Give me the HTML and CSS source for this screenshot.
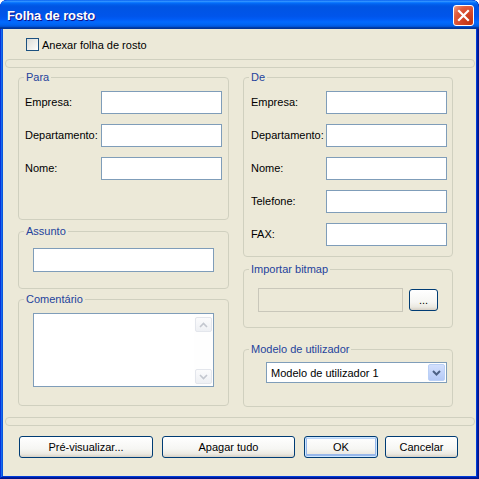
FILE: index.html
```html
<!DOCTYPE html>
<html lang="pt">
<head>
<meta charset="utf-8">
<title>Folha de rosto</title>
<link rel="stylesheet" href="styles.css">
</head>
<body>
<div class="window">
  <div class="titlebar">
    <span class="title">Folha de rosto</span>
    <button class="close" aria-label="Fechar">
      <svg width="13" height="13" viewBox="0 0 13 13"><path d="M2 2 L11 11 M11 2 L2 11" stroke="#fff" stroke-width="2.2" stroke-linecap="square" fill="none"/></svg>
    </button>
  </div>
  <div class="client">
    <label class="check-row"><span class="checkbox"></span>Anexar folha de rosto</label>
    <div class="separator"></div>
    <div class="columns">
      <div class="col col-left">
        <fieldset class="group g-para">
          <legend>Para</legend>
          <div class="rows">
            <div class="row"><span class="lbl">Empresa:</span><span class="input field"></span></div>
            <div class="row"><span class="lbl">Departamento:</span><span class="input field"></span></div>
            <div class="row"><span class="lbl">Nome:</span><span class="input field"></span></div>
          </div>
        </fieldset>
        <fieldset class="group g-assunto">
          <legend>Assunto</legend>
          <span class="input wide"></span>
        </fieldset>
        <fieldset class="group g-coment">
          <legend>Comentário</legend>
          <div class="input textarea">
            <div class="scrollbar">
              <span class="sbtn"><svg width="9" height="6" viewBox="0 0 9 6"><path d="M1 5 L4.5 1.5 L8 5" stroke="#c3c7cf" stroke-width="1.6" fill="none"/></svg></span>
              <span class="sbtn"><svg width="9" height="6" viewBox="0 0 9 6"><path d="M1 1 L4.5 4.5 L8 1" stroke="#c3c7cf" stroke-width="1.6" fill="none"/></svg></span>
            </div>
          </div>
        </fieldset>
      </div>
      <div class="col col-right">
        <fieldset class="group g-de">
          <legend>De</legend>
          <div class="rows">
            <div class="row"><span class="lbl">Empresa:</span><span class="input field"></span></div>
            <div class="row"><span class="lbl">Departamento:</span><span class="input field"></span></div>
            <div class="row"><span class="lbl">Nome:</span><span class="input field"></span></div>
            <div class="row"><span class="lbl">Telefone:</span><span class="input field"></span></div>
            <div class="row"><span class="lbl">FAX:</span><span class="input field"></span></div>
          </div>
        </fieldset>
        <fieldset class="group g-import">
          <legend>Importar bitmap</legend>
          <div class="import-row">
            <span class="input disabled"></span>
            <button class="btn btn-dots">...</button>
          </div>
        </fieldset>
        <fieldset class="group g-modelo">
          <legend>Modelo de utilizador</legend>
          <div class="input select">
            <span class="select-text">Modelo de utilizador 1</span>
            <span class="drop"><svg width="9" height="6" viewBox="0 0 9 6"><path d="M1 1 L4.5 4.5 L8 1" stroke="#4d6185" stroke-width="2" fill="none"/></svg></span>
          </div>
        </fieldset>
      </div>
    </div>
    <div class="separator sep-bottom"></div>
    <div class="buttons">
      <button class="btn b-prev">Pré-visualizar...</button>
      <button class="btn b-clear">Apagar tudo</button>
      <button class="btn b-ok">OK</button>
      <button class="btn b-cancel">Cancelar</button>
    </div>
  </div>
</div>
</body>
</html>
```
FILE: styles.css
```css
* { box-sizing: border-box; }
body {
  margin: 0;
  background: #ffffff;
  font-family: "Liberation Sans", Arial, sans-serif;
  font-size: 11px;
  color: #000;
}
.window {
  width: 479px;
  height: 479px;
  display: flex;
  flex-direction: column;
  background: #0855dd;
  border-radius: 7px 7px 0 0;
  overflow: hidden;
  box-shadow: inset -1px -1px #00138c, inset 1px 1px #0831d9, inset -2px -2px #001ea0, inset 2px 2px #166aee, inset -3px -3px #003bda, inset 3px 3px #0855dd;
}
.titlebar {
  height: 29px;
  flex: none;
  display: flex;
  align-items: center;
  justify-content: space-between;
  padding: 0 5px 0 7px;
  background: linear-gradient(to bottom, #0058ee 0%, #3593ff 4%, #288eff 6%, #127dff 8%, #036ffc 10%, #0262ee 14%, #0057e5 20%, #0054e3 24%, #0055eb 56%, #005bf5 66%, #026afe 76%, #0062ef 86%, #0052d6 92%, #0040ab 94%, #003092 100%);
  border-radius: 7px 7px 0 0;
}
.title {
  color: #fff;
  font-weight: bold;
  font-size: 13px;
  text-shadow: 1px 1px #0f1089;
  letter-spacing: -0.1px;
  margin-top: 1px;
}
.close {
  width: 21px;
  height: 21px;
  padding: 0;
  border: 1px solid #fff;
  border-radius: 3px;
  display: flex;
  align-items: center;
  justify-content: center;
  background: radial-gradient(circle at 85% 85%, #c33511 0%, #d6482a 45%, #e05d3e 70%, #eb8a70 90%, #f3b8a6 100%);
  margin-top: 1px;
}
.client {
  flex: 1;
  margin: 0 3px 3px;
  background: #ece9d8;
  display: flex;
  flex-direction: column;
}
.check-row {
  display: flex;
  align-items: center;
  height: 13px;
  margin: 9px 0 0 23px;
}
.checkbox {
  width: 13px;
  height: 13px;
  border: 1px solid #1c5180;
  background: linear-gradient(135deg, #dcdcd7 0%, #f4f4f0 70%, #ffffff 100%);
  margin-right: 3px;
}
.separator {
  width: 470px;
  height: 9px;
  margin: 8px 0 0 2px;
  border: 1px solid #d0d0bf;
  border-radius: 4px;
}
.columns {
  display: flex;
  gap: 14px;
  padding-left: 15px;
  margin-top: 3px;
}
.col { display: flex; flex-direction: column; }
.col-left { width: 211px; }
.col-right { width: 210px; }
.group {
  margin: 0;
  min-width: 0;
  border: 1px solid #d0d0bf;
  border-radius: 4px;
  padding: 0 6px;
}
.group legend {
  padding: 0 2px;
  margin-left: -1px;
  line-height: 13px;
  color: #24439c;
}
.rows { display: flex; flex-direction: column; gap: 10px; }
.row { display: flex; align-items: center; height: 23px; }
.lbl { flex: 1; white-space: nowrap; margin-top: -1px; }
.input {
  display: block;
  border: 1px solid #7f9db9;
  background: #fff;
}
.field { width: 121px; height: 23px; flex: none; }
.g-para { height: 149px; padding-top: 7px; }
.g-assunto { height: 64px; margin-top: 5px; padding: 10px 0 0 14px; }
.g-assunto legend, .g-coment legend { margin-left: -9px; }
.wide { width: 181px; height: 24px; }
.g-coment { height: 113px; margin-top: 4px; padding: 7px 0 0 14px; }
.textarea {
  width: 181px;
  height: 74px;
  display: flex;
  justify-content: flex-end;
}
.scrollbar {
  width: 19px;
  padding: 3px 1px 2px 1px;
  display: flex;
  flex-direction: column;
  justify-content: space-between;
  background: #fefefe;
}
.sbtn {
  width: 17px;
  height: 15px;
  border: 1px solid #e3e6ec;
  border-radius: 2px;
  background: linear-gradient(#fbfbfc, #eef0f4);
  display: flex;
  align-items: center;
  justify-content: center;
}
.g-de { height: 186px; padding: 7px 5px 0 7px; }
.g-de legend { margin-left: -2px; }
.g-import { height: 65px; margin-top: 6px; padding: 12px 0 0 14px; }
.g-import legend { margin-left: -9px; }
.import-row { display: flex; align-items: center; }
.disabled {
  width: 145px;
  height: 24px;
  border-color: #c9c7ba;
  background: #ece9d8;
}
.g-modelo { height: 64px; margin-top: 15px; padding: 6px 0 0 22px; }
.g-modelo legend { margin-left: -17px; }
.select {
  width: 181px;
  height: 21px;
  display: flex;
  align-items: center;
  justify-content: space-between;
  padding: 1px;
}
.select-text { padding-left: 3px; }
.drop {
  width: 17px;
  height: 17px;
  border: 1px solid #bad0f6;
  border-radius: 2px;
  background: linear-gradient(#d3e0fd, #b5c9f6);
  display: flex;
  align-items: center;
  justify-content: center;
}
.btn {
  font-family: "Liberation Sans", Arial, sans-serif;
  font-size: 11px;
  color: #000;
  height: 22px;
  padding: 0;
  border: 1px solid #003c74;
  border-radius: 3px;
  background: linear-gradient(to bottom, #ffffff 0%, #f6f6f3 60%, #ebe9e1 85%, #d6d0c5 100%);
}
.btn-dots { width: 29px; margin-left: 6px; }
.buttons {
  display: flex;
  margin-top: 10px;
  padding-left: 16px;
}
.b-prev { width: 134px; }
.b-clear { width: 133px; margin-left: 9px; }
.b-ok {
  width: 74px;
  margin-left: 9px;
  box-shadow: inset 0 0 0 1px #cee7ff, inset 0 -1px 0 2px #98b8ea, inset 0 1px 0 1px #bcd4f6;
}
.b-cancel { width: 73px; margin-left: 7px; }
.sep-bottom { margin-top: 10px; }
```
